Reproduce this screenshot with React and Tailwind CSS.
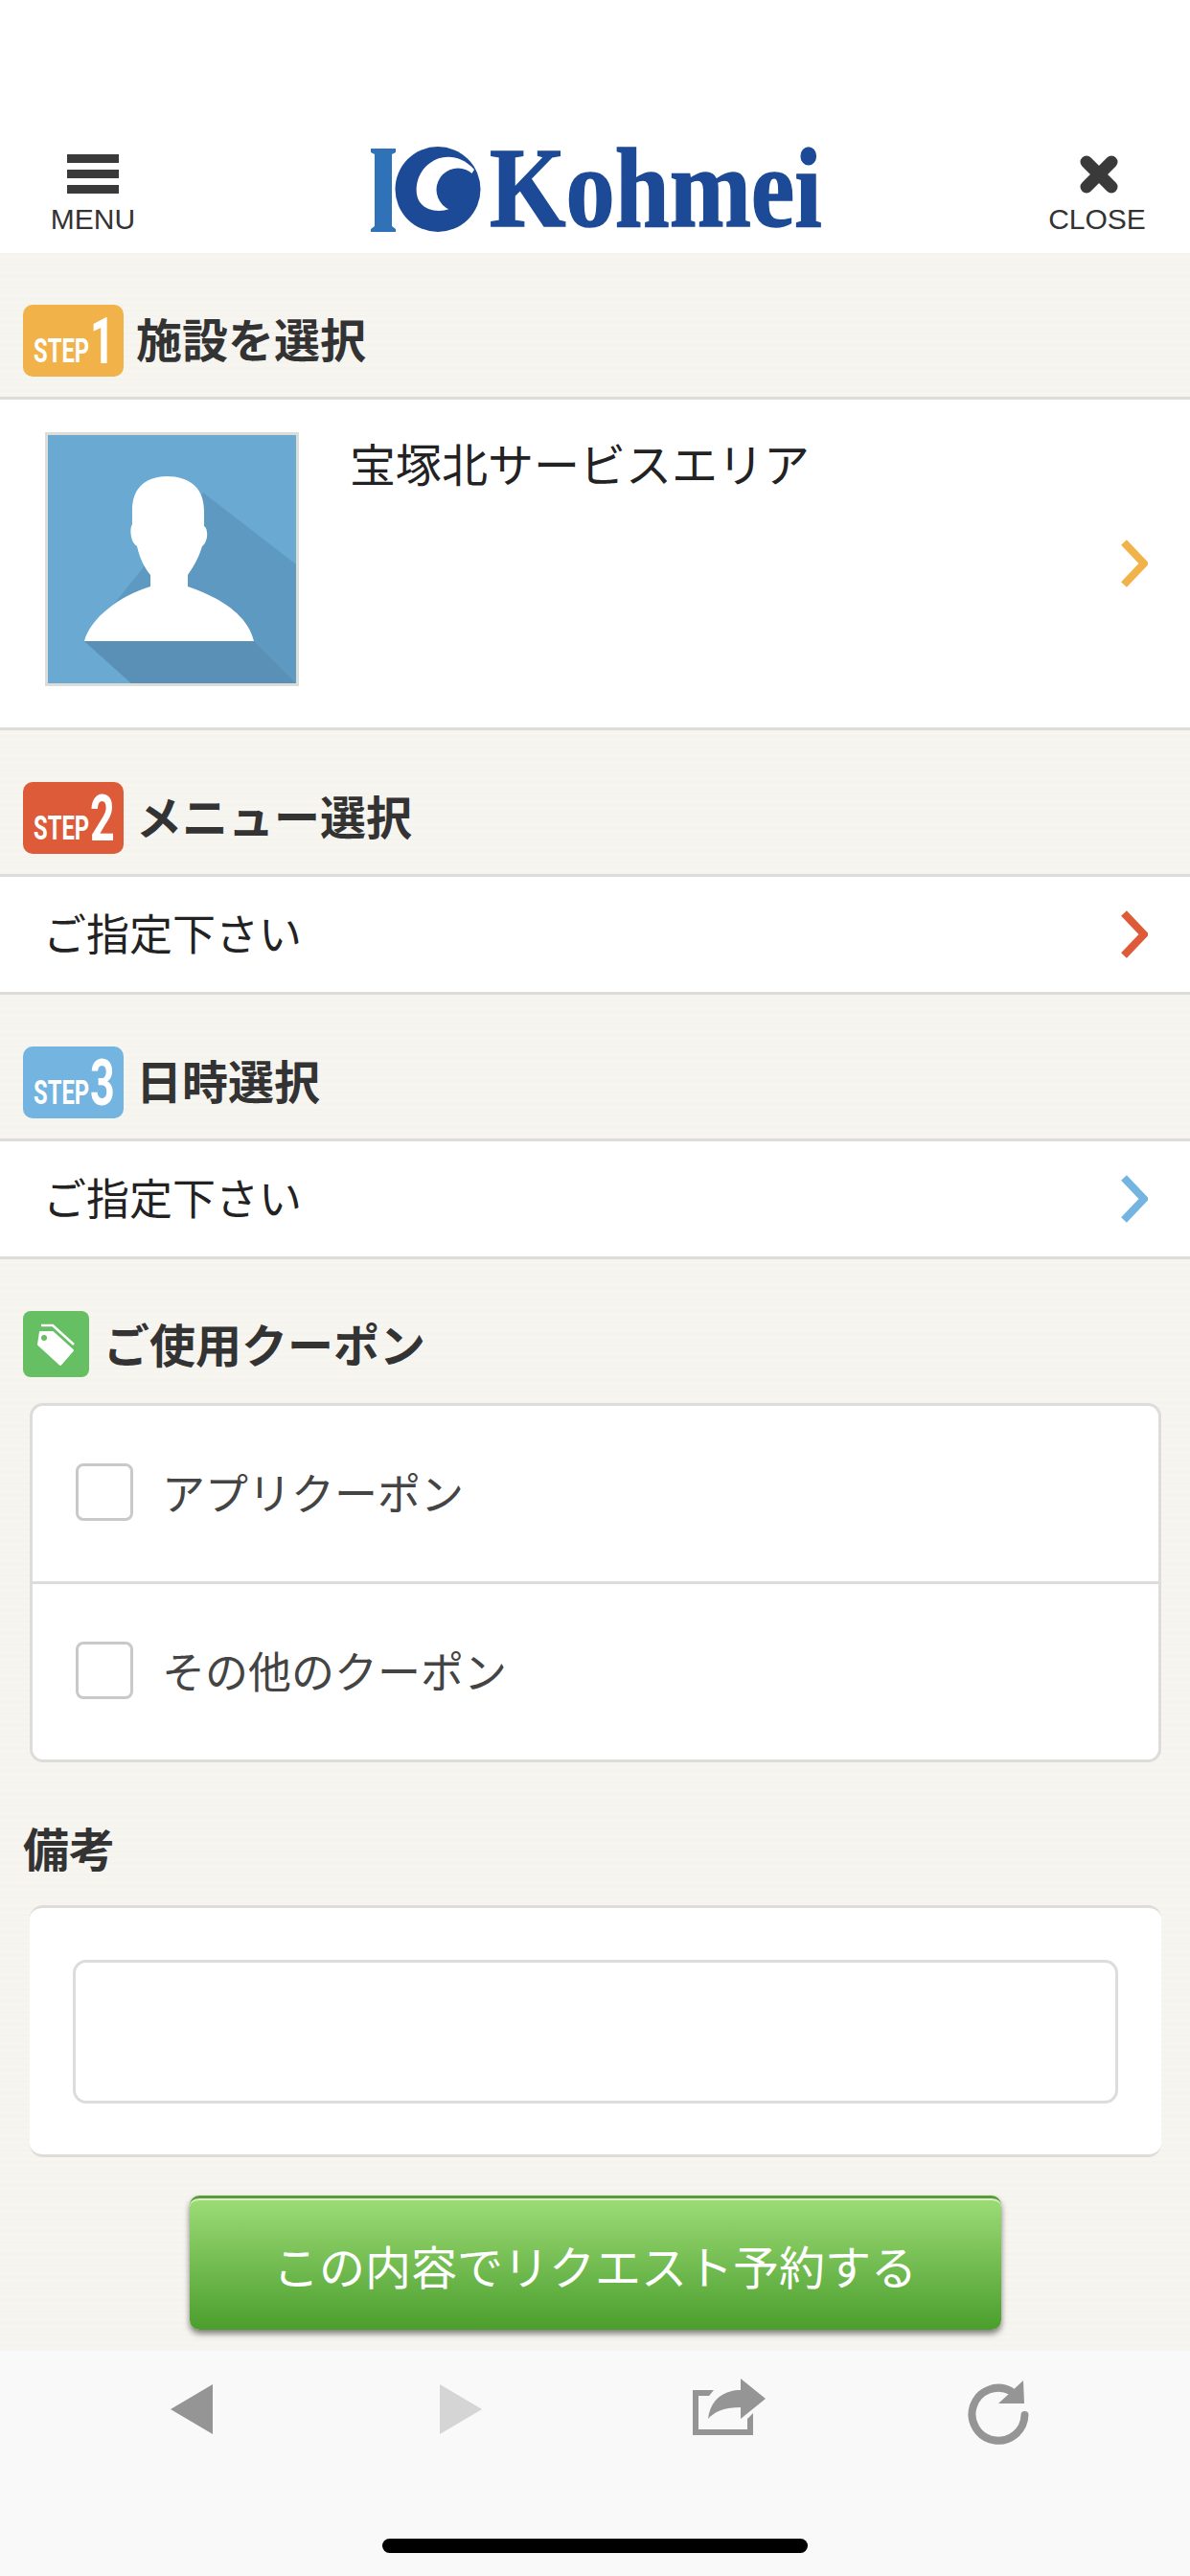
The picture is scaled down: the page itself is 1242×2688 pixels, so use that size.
import { useState } from "react";

function Logo() {
  return (
    <div className="flex items-start h-[92px]">
      <svg width="124" height="92" viewBox="0 0 124 92" className="block shrink-0">
        <path d="M0 3H26V7L22 9V84L26 87V90H0V87L4 84V9L0 7Z" fill="#2f72b8" />
        <circle cx="70" cy="45.5" r="44.5" fill="#1c4a96" />
        <path d="M108 25C95 10 75 8 62 18C47 28 44 50 52 60C58 68 72 70 82 66L95 45Z" fill="#fff" />
        <circle cx="91" cy="46" r="22.5" fill="#1c4a96" />
      </svg>
      <span className="block w-[347px] mt-[-14px] text-[118px] leading-[118px] font-bold whitespace-nowrap text-[#1c4a96] origin-left scale-x-[0.867] font-['Liberation_Serif',serif] [-webkit-text-stroke:1.5px_#1c4a96]">
        Kohmei
      </span>
    </div>
  );
}

// STEP + number, squeezed the way the condensed badge font looks
function StepBadge({ n, bg }) {
  return (
    <div className={`w-[105px] h-[75px] rounded-[10px] ${bg} flex items-start pl-[11px] shrink-0 text-white font-bold font-['Roboto',sans-serif]`}>
      <span className="block w-[57px] mt-[31px] text-[35px] leading-[35px] whitespace-nowrap origin-left scale-x-[0.68]">STEP</span>
      <span className="block w-[25px] ml-[2px] mt-[6px] text-[66px] leading-[66px] origin-left scale-x-[0.68]">{n}</span>
    </div>
  );
}

function Chevron({ color }) {
  return (
    <svg width="29" height="50" viewBox="0 0 29 50" className="block shrink-0">
      <polyline points="4,3 25,25 4,47" fill="none" stroke={color} strokeWidth="8" />
    </svg>
  );
}

function StepHeading({ n, bg, title }) {
  return (
    <div className="h-[153px] border-b-[3px] border-[#dddcda] pt-[54px] pl-[24px] flex items-start gap-[13px]">
      <StepBadge n={n} bg={bg} />
      <h2 className="text-[48px] leading-[69px] font-bold text-[#333]">{title}</h2>
    </div>
  );
}

function PickRow({ color }) {
  return (
    <div className="h-[123px] bg-white border-b-[3px] border-[#dddcda] flex items-center justify-between pl-[45px] pr-[44px]">
      <span className="text-[45px] leading-[60px] mb-[4px] text-[#222]">ご指定下さい</span>
      <Chevron color={color} />
    </div>
  );
}

function Avatar() {
  return (
    <div className="w-[265px] h-[265px] border-[3px] border-[#dcdcd8] shrink-0">
      <svg viewBox="0 0 259 259" className="block w-full h-full">
        <rect width="259" height="259" fill="#69a9d2" />
        <path d="M162 60L259 135V259H87L38 215Z" fill="#5e99c2" />
        <path d="M38 215H215L259 259H87Z" fill="#5b90b6" />
        <path
          d="M124 43C142 43 163 50 163 80L163 95C168 98 167 112 161 116C157 130 150 140 146 146L146 158C175 168 208 185 215 215L38 215C45 190 75 168 107 158L107 146C102 140 96 130 93 116C86 112 85 98 88 93L88 78C88 52 106 43 124 43Z"
          fill="#fff"
        />
      </svg>
    </div>
  );
}

function CouponRow({ label, checked, onToggle, last }) {
  return (
    <label className={`flex-1 flex items-center gap-[30px] pl-[45px] pb-[3px] cursor-pointer ${last ? "" : "border-b-[3px] border-[#dddcda]"}`}>
      <input type="checkbox" checked={checked} onChange={onToggle} className="peer sr-only" />
      <span className="w-[60px] h-[60px] rounded-[8px] border-[3px] border-[#c9c9c9] bg-white shrink-0" />
      <span className="text-[45px] leading-[60px] text-[#444]">{label}</span>
    </label>
  );
}

export default function App() {
  const [appCoupon, setAppCoupon] = useState(false);
  const [otherCoupon, setOtherCoupon] = useState(false);
  const [note, setNote] = useState("");

  return (
    <div className="w-[1242px] h-[2688px] flex flex-col bg-white font-['Noto_Sans_CJK_JP','Noto_Sans',sans-serif] overflow-hidden">
      {/* header */}
      <header className="h-[264px] shrink-0 flex items-start pt-[152px] bg-white">
        <button type="button" className="ml-[54px] w-[86px] flex flex-col items-center text-[30px] leading-[34px] text-[#333] font-['Liberation_Sans',sans-serif]">
          <span className="flex flex-col gap-[7px] mt-[9px] mb-[10px]">
            <span className="block w-[54px] h-[9px] bg-[#3a3a3a]" />
            <span className="block w-[54px] h-[9px] bg-[#3a3a3a]" />
            <span className="block w-[54px] h-[9px] bg-[#3a3a3a]" />
          </span>
          MENU
        </button>
        <div className="ml-[247px]">
          <Logo />
        </div>
        <button type="button" className="ml-auto mr-[47px] w-[100px] flex flex-col items-center text-[30px] leading-[34px] text-[#333] font-['Liberation_Sans',sans-serif]">
          <svg width="42" height="42" viewBox="0 0 42 42" className="block mt-[9px] mb-[9px] ml-[3px]">
            <path d="M8 8L34 34M34 8L8 34" stroke="#3a3a3a" strokeWidth="13" strokeLinecap="round" />
          </svg>
          CLOSE
        </button>
      </header>

      <main className="flex-1 bg-[#f5f4ef] bg-[repeating-linear-gradient(0deg,#f6f5f0_0px,#f6f5f0_4px,#f4f3ee_4px,#f4f3ee_6px)]">
        <StepHeading n="1" bg="bg-[#f0b249]" title="施設を選択" />
        <div className="h-[345px] bg-white border-b-[3px] border-[#dddcda] flex items-center justify-between pl-[47px] pr-[44px]">
          <div className="self-start flex gap-[53px] pt-[34px]">
            <Avatar />
            <span className="text-[48px] leading-[62px] text-[#222]">宝塚北サービスエリア</span>
          </div>
          <Chevron color="#f0b249" />
        </div>

        <StepHeading n="2" bg="bg-[#dd5b39]" title="メニュー選択" />
        <PickRow color="#dd5b39" />

        <StepHeading n="3" bg="bg-[#73b4e0]" title="日時選択" />
        <PickRow color="#73b4e0" />

        {/* coupon */}
        <div className="mt-[54px] ml-[24px] flex items-start gap-[15px]">
          <div className="w-[69px] h-[69px] rounded-[8px] bg-[#67bf63] shrink-0">
            <svg width="69" height="69" viewBox="0 0 69 69" className="block">
              <path d="M19 15H31L53 35" fill="none" stroke="#fff" strokeWidth="2.5" />
              <path d="M18 22H31L52 41L39 56L16 35Z" fill="#fff" stroke="#fff" strokeWidth="2" strokeLinejoin="round" />
              <circle cx="22" cy="28" r="3" fill="#67bf63" />
            </svg>
          </div>
          <h2 className="text-[48px] leading-[67px] font-bold text-[#333]">ご使用クーポン</h2>
        </div>
        <div className="mt-[27px] ml-[31px] w-[1181px] h-[375px] bg-white rounded-[14px] border-[3px] border-[#dddcda] flex flex-col">
          <CouponRow label="アプリクーポン" checked={appCoupon} onToggle={() => setAppCoupon(!appCoupon)} />
          <CouponRow label="その他のクーポン" checked={otherCoupon} onToggle={() => setOtherCoupon(!otherCoupon)} last />
        </div>

        {/* note */}
        <h2 className="mt-[55px] ml-[24px] text-[48px] leading-[66px] font-bold text-[#333]">備考</h2>
        <div className="mt-[28px] ml-[31px] w-[1181px] h-[263px] bg-white rounded-[14px] border-y-[3px] border-[#dddcda] pt-[54px] pl-[45px] pr-[45px]">
          <textarea
            value={note}
            onChange={(e) => setNote(e.target.value)}
            className="block w-[1091px] h-[150px] rounded-[14px] border-[3px] border-[#dddcda] bg-white outline-none resize-none"
          />
        </div>

        <div className="mt-[40px] flex justify-center">
          <button
            type="button"
            className="w-[847px] h-[140px] rounded-[10px] border-t-[3px] border-[#5c9a3a] bg-gradient-to-b from-[#9cdc76] to-[#4a9e2b] shadow-[inset_0_2px_0_#d8f2c6,0_4px_6px_rgba(0,0,0,0.5)] text-[48px] text-white"
          >
            この内容でリクエスト予約する
          </button>
        </div>
      </main>

      {/* browser bar */}
      <nav className="h-[235px] shrink-0 bg-[#f9f9f9] flex flex-col items-center">
        <div className="w-full h-[196px] px-[60px] pt-[29px] grid grid-cols-4 justify-items-center items-start">
          <svg width="44" height="64" viewBox="0 0 44 64" className="block">
            <path d="M44 6V58L0 32Z" fill="#959595" />
          </svg>
          <svg width="44" height="64" viewBox="0 0 44 64" className="block">
            <path d="M0 6V58L44 32Z" fill="#d5d5d5" />
          </svg>
          <svg width="77" height="60" viewBox="0 0 77 60" className="block">
            <path d="M0 12H22L17 18H6V53H57V42L63 36V59H0Z" fill="#959595" />
            <path d="M76 21L50 0V12C30 12 18 24 16 42C24 33 36 30 50 30V42Z" fill="#959595" />
          </svg>
          <svg width="70" height="70" viewBox="0 0 70 70" className="block ml-[3px]">
            <path d="M61.5 38A27.5 27.5 0 1 1 47 13" fill="none" stroke="#959595" strokeWidth="8" strokeLinecap="round" />
            <path d="M60 2L61 26L34 26Z" fill="#959595" />
          </svg>
        </div>
        <div className="w-[444px] h-[15px] rounded-full bg-black" />
      </nav>
    </div>
  );
}
